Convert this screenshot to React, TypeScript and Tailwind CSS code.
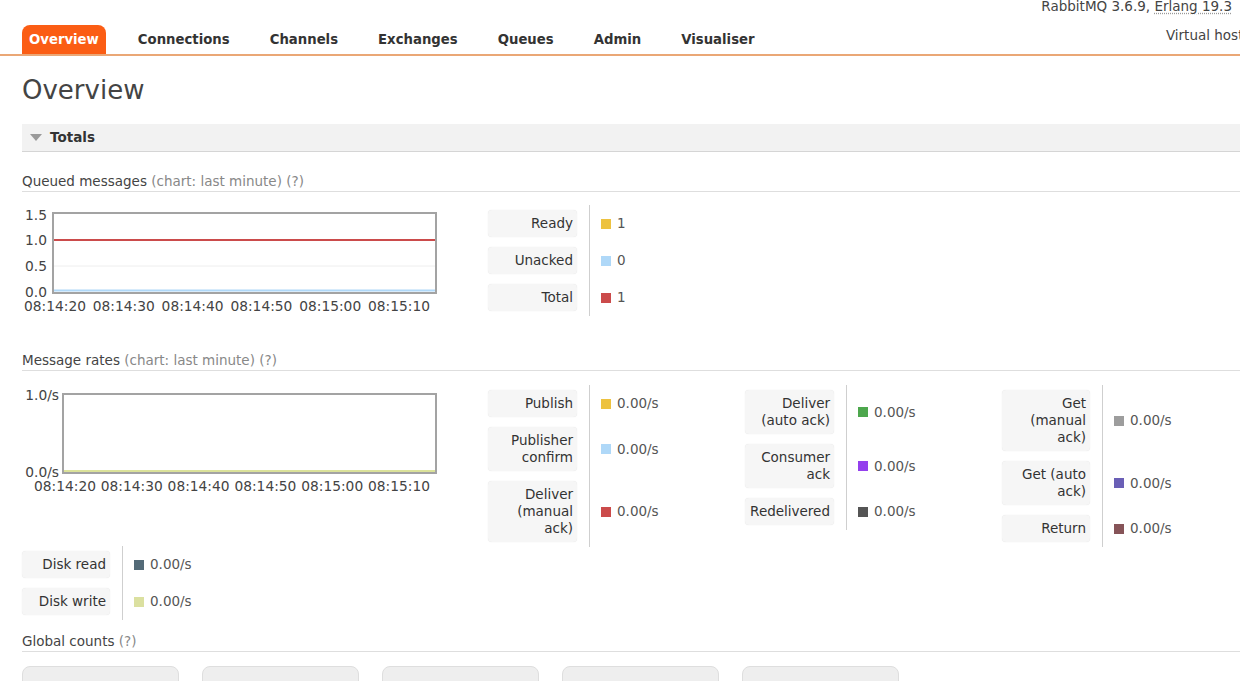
import React from "react";

type Stat = { label: string; color: string; value: string };

const tabs = ["Overview", "Connections", "Channels", "Exchanges", "Queues", "Admin", "Visualiser"];

const queued: Stat[] = [
  { label: "Ready", color: "#edc240", value: "1" },
  { label: "Unacked", color: "#afd8f8", value: "0" },
  { label: "Total", color: "#cb4b4b", value: "1" },
];

const rateCols: Stat[][] = [
  [
    { label: "Publish", color: "#edc240", value: "0.00/s" },
    { label: "Publisher confirm", color: "#afd8f8", value: "0.00/s" },
    { label: "Deliver (manual ack)", color: "#cb4b4b", value: "0.00/s" },
  ],
  [
    { label: "Deliver (auto ack)", color: "#4da74d", value: "0.00/s" },
    { label: "Consumer ack", color: "#9440ed", value: "0.00/s" },
    { label: "Redelivered", color: "#555555", value: "0.00/s" },
  ],
  [
    { label: "Get (manual ack)", color: "#9d9d9d", value: "0.00/s" },
    { label: "Get (auto ack)", color: "#6a5fb6", value: "0.00/s" },
    { label: "Return", color: "#865458", value: "0.00/s" },
  ],
];

const disk: Stat[] = [
  { label: "Disk read", color: "#546b78", value: "0.00/s" },
  { label: "Disk write", color: "#dbe0a0", value: "0.00/s" },
];

const times = ["08:14:20", "08:14:30", "08:14:40", "08:14:50", "08:15:00", "08:15:10"];

// legend column: label box, thin divider, swatch + value
function StatList({ items, width = 89 }: { items: Stat[]; width?: number }) {
  return (
    <div className="flex flex-col">
      {items.map((s) => (
        <div key={s.label} className="flex">
          <div className="py-[5px]">
            <div
              className="rounded-[4px] bg-[#f6f6f6] shadow-[0_0_1px_rgba(0,0,0,0.15)] px-[4px] py-[5px] text-right leading-[17px] text-[#333]"
              style={{ width }}
            >
              {s.label}
            </div>
          </div>
          <div className="ml-[12px] flex items-center border-l border-[#cfcfcf] pl-[11px]">
            <span className="mr-[6px] inline-block h-[10px] w-[10px]" style={{ background: s.color }} />
            <span className="text-[#555]">{s.value}</span>
          </div>
        </div>
      ))}
    </div>
  );
}

function QueuedChart() {
  const ys = [
    { t: "1.5", y: 10 },
    { t: "1.0", y: 35 },
    { t: "0.5", y: 61 },
    { t: "0.0", y: 87 },
  ];
  return (
    <svg width="420" height="110" className="block" fontFamily="'DejaVu Sans', sans-serif" fontSize="13.8">
      <line x1="31" x2="413" y1="61" y2="61" stroke="#eeeeee" />
      <line x1="31" x2="413" y1="35" y2="35" stroke="#cb4b4b" strokeWidth="2" />
      <rect x="31" y="8" width="383" height="80" fill="none" stroke="#a3a3a3" strokeWidth="2" />
      <line x1="32" x2="413" y1="85.5" y2="85.5" stroke="#afd8f8" strokeWidth="2" />
      {ys.map((l) => (
        <text key={l.t} x="25" y={l.y + 5} textAnchor="end" fill="#444">
          {l.t}
        </text>
      ))}
      {times.map((t, i) => (
        <text key={t} x={33 + i * 68.8} y="106" textAnchor="middle" fill="#444">
          {t}
        </text>
      ))}
    </svg>
  );
}

function RatesChart() {
  return (
    <svg width="420" height="110" className="block" fontFamily="'DejaVu Sans', sans-serif" fontSize="13.8">
      <rect x="41" y="9" width="373" height="79" fill="none" stroke="#a3a3a3" strokeWidth="2" />
      <line x1="42" x2="413" y1="86" y2="86" stroke="#dbe29a" strokeWidth="2" />
      <text x="37" y="15" textAnchor="end" fill="#444">1.0/s</text>
      <text x="37" y="92" textAnchor="end" fill="#444">0.0/s</text>
      {times.map((t, i) => (
        <text key={t} x={43 + i * 66.8} y="106" textAnchor="middle" fill="#444">
          {t}
        </text>
      ))}
    </svg>
  );
}

function SubHeading({ title, extra }: { title: string; extra: string }) {
  return (
    <div className="border-b border-[#dedede] pb-[2px] leading-[16px] text-[#444]">
      {title} <span className="text-[#888]">{extra}</span>
    </div>
  );
}

export default function App() {
  return (
    <div className="h-[681px] w-[1240px] overflow-hidden bg-white text-[13.5px] text-[#484848] [font-family:'DejaVu_Sans',Verdana,sans-serif]">
      {/* top right version info */}
      <div className="flex h-[25px] justify-end pr-[8px]">
        <div className="mt-[-1px] leading-[15px] text-[#444]">
          RabbitMQ 3.6.9,{" "}
          <span className="underline decoration-dotted decoration-[#999] underline-offset-2">Erlang 19.3</span>
        </div>
      </div>

      {/* tabs */}
      <div className="flex border-b-2 border-[#eaa776] pl-[22px]">
        <div className="flex shrink-0 gap-[24px] text-[13.25px]">
          {tabs.map((t, i) => (
            <div
              key={t}
              className={
                i === 0
                  ? "h-[29px] rounded-t-[8px] bg-[#fb5d14] px-[7px] font-bold leading-[30px] text-white"
                  : "h-[29px] px-[8px] font-bold leading-[30px] text-[#333]"
              }
            >
              {t}
            </div>
          ))}
        </div>
        <div className="flex-1" />
        <div className="mr-[-29px] mt-[3px] shrink-0 whitespace-nowrap leading-[14px] text-[#444]">Virtual host: All</div>
      </div>

      <div className="pl-[22px]">
        <h1 className="mt-[18px] text-[26px] leading-[32px] text-[#444]">Overview</h1>

        {/* Totals section */}
        <div className="mt-[18px] flex h-[28px] items-center border-b border-[#d5d5d5] bg-[#f2f2f2]">
          <span className="ml-[8px] h-0 w-0 border-l-[6px] border-r-[6px] border-t-[7px] border-l-transparent border-r-transparent border-t-[#9a9a9a]" />
          <span className="ml-[8px] font-bold text-[#333]">Totals</span>
        </div>

        <div className="mt-[21px]">
          <SubHeading title="Queued messages" extra="(chart: last minute) (?)" />
        </div>
        <div className="mt-[13px] flex">
          <div className="w-[466px] shrink-0">
            <QueuedChart />
          </div>
          <StatList items={queued} />
        </div>

        <div className="mt-[36px]">
          <SubHeading title="Message rates" extra="(chart: last minute) (?)" />
        </div>
        <div className="mt-[14px] flex">
          <div className="w-[466px] shrink-0">
            <RatesChart />
          </div>
          {rateCols.map((col, i) => (
            <div key={i} className="w-[257px] shrink-0">
              <StatList items={col} width={i === 2 ? 88 : 89} />
            </div>
          ))}
        </div>

        <div className="mt-[-1px]">
          <StatList items={disk} width={88} />
        </div>

        <div className="mt-[13px]">
          <SubHeading title="Global counts" extra="(?)" />
        </div>
        <div className="mt-[14px] flex gap-[23px]">
          {[0, 1, 2, 3, 4].map((b) => (
            <div key={b} className="h-[40px] w-[157px] shrink-0 rounded-t-[8px] border border-[#dedede] bg-[#eeeeee]" />
          ))}
        </div>
      </div>
    </div>
  );
}
